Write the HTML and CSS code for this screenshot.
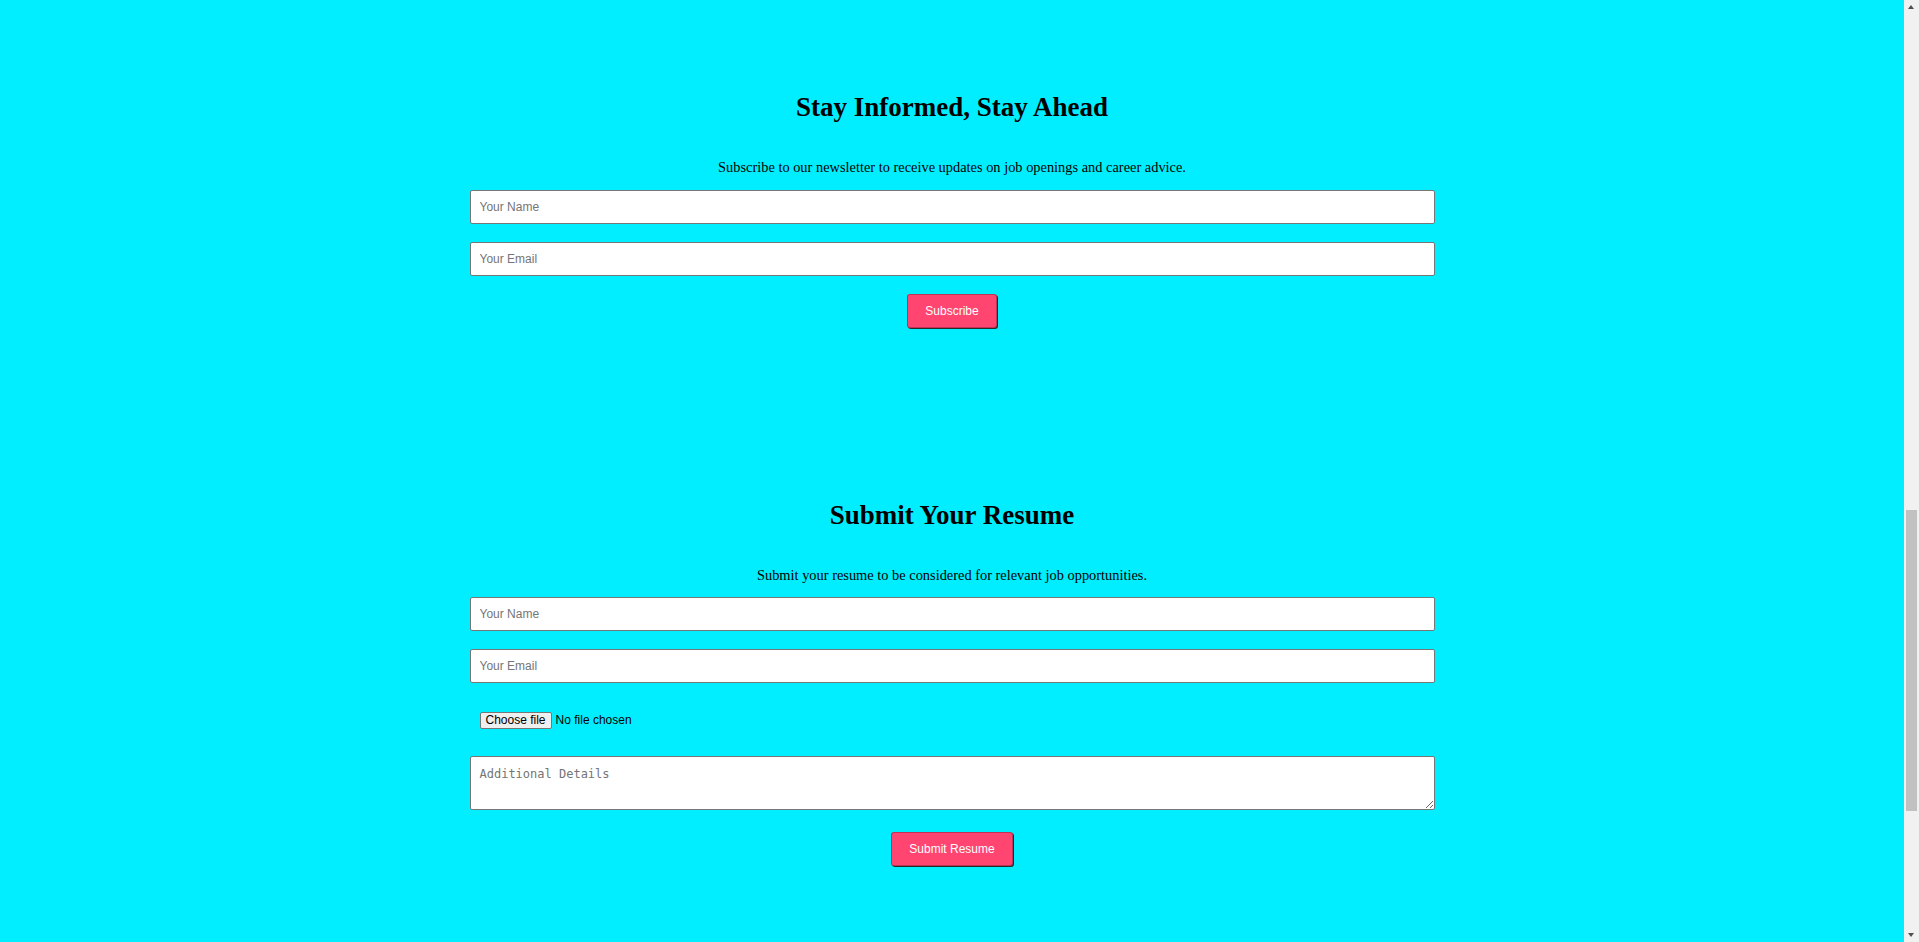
FILE: index.html
```html
<!DOCTYPE html>
<html lang="en">
<head>
<meta charset="utf-8">
<title>Careers</title>
<link rel="stylesheet" href="styles.css">
</head>
<body>
<main class="page">
  <section class="block block-newsletter">
    <h2 class="block-title">Stay Informed, Stay Ahead</h2>
    <p class="block-text">Subscribe to our newsletter to receive updates on job openings and career advice.</p>
    <form class="form">
      <input class="field" type="text" placeholder="Your Name">
      <input class="field" type="email" placeholder="Your Email">
      <button class="btn" type="button">Subscribe</button>
    </form>
  </section>
  <section class="block block-resume">
    <h2 class="block-title">Submit Your Resume</h2>
    <p class="block-text">Submit your resume to be considered for relevant job opportunities.</p>
    <form class="form form-resume">
      <input class="field" type="text" placeholder="Your Name">
      <input class="field" type="email" placeholder="Your Email">
      <label class="file">
        <input class="file-input" type="file">
        <span class="file-btn">Choose file</span>
        <span class="file-name">No file chosen</span>
      </label>
      <textarea class="area" placeholder="Additional Details"></textarea>
      <button class="btn btn-resume" type="button">Submit Resume</button>
    </form>
  </section>
</main>
<div class="scrollbar" aria-hidden="true">
  <span class="sb-arrow sb-up"></span>
  <span class="sb-thumb"></span>
  <span class="sb-arrow sb-down"></span>
</div>
</body>
</html>
```
FILE: styles.css
```css
html {
  background: #00eeff;
}
body {
  margin: 0;
  padding-right: 15px;
  background: #00eeff;
  font-family: "Liberation Serif", "Times New Roman", serif;
  color: #000;
}
.page {
  display: block;
}
.block {
  text-align: center;
}
.block-newsletter {
  padding-top: 91px;
}
.block-resume {
  padding-top: 171px;
  padding-bottom: 76px;
}
.block-title {
  margin: 0;
  font-size: 27px;
  line-height: 32px;
  font-weight: bold;
}
.block-text {
  margin: 35px 0 0;
  font-size: 14.4px;
  line-height: 18px;
}
.form {
  width: 965px;
  margin: 14px auto 0;
  display: flex;
  flex-direction: column;
  align-items: center;
  gap: 18px;
}
.form-resume {
  margin-top: 13px;
}
.field {
  box-sizing: border-box;
  width: 100%;
  height: 34px;
  margin: 0;
  padding: 0 9px;
  border: 1px solid #767676;
  border-radius: 2px;
  background: #fff;
  font-family: "Liberation Sans", Arial, sans-serif;
  font-size: 12px;
  color: #000;
}
.field::placeholder {
  color: #757575;
}
.file {
  align-self: flex-start;
  display: flex;
  align-items: center;
  gap: 4px;
  padding: 11px 10px 9px;
  font-family: "Liberation Sans", Arial, sans-serif;
  font-size: 12px;
  color: #000;
}
.file-input {
  display: none;
}
.file-btn {
  box-sizing: border-box;
  height: 17px;
  padding: 0 5px;
  border: 1px solid #767676;
  border-radius: 2px;
  background: #efefef;
  line-height: 15px;
  color: #000;
}
.file-name {
  line-height: 17px;
}
.area {
  box-sizing: border-box;
  width: 100%;
  height: 54px;
  margin: 0;
  padding: 10px 9px;
  border: 1px solid #767676;
  border-radius: 2px;
  background: #fff;
  font-family: "DejaVu Sans Mono", "Liberation Mono", monospace;
  font-size: 12px;
  line-height: 15px;
  resize: vertical;
}
.area::placeholder {
  color: #757575;
}
.btn {
  box-sizing: border-box;
  height: 34px;
  margin: 0;
  padding: 0 17px;
  border: 1px solid rgba(0, 0, 0, 0.25);
  border-radius: 3px;
  background: #ff4570;
  box-shadow: 1px 1px 0 #2a2a2a;
  font-family: "Liberation Sans", Arial, sans-serif;
  font-size: 12px;
  color: #fff;
  cursor: pointer;
}
.btn-resume {
  margin-top: 4px;
}
.scrollbar {
  position: fixed;
  top: 0;
  right: 0;
  bottom: 0;
  width: 15px;
  background: #f1f1f1;
}
.sb-thumb {
  position: absolute;
  top: 510px;
  left: 2px;
  width: 11px;
  height: 301px;
  background: #c1c1c1;
}
.sb-arrow {
  position: absolute;
  left: 4px;
  width: 0;
  height: 0;
  border-left: 3.5px solid transparent;
  border-right: 3.5px solid transparent;
}
.sb-up {
  top: 5px;
  border-bottom: 4px solid #505050;
}
.sb-down {
  bottom: 5px;
  border-top: 4px solid #505050;
}
```
